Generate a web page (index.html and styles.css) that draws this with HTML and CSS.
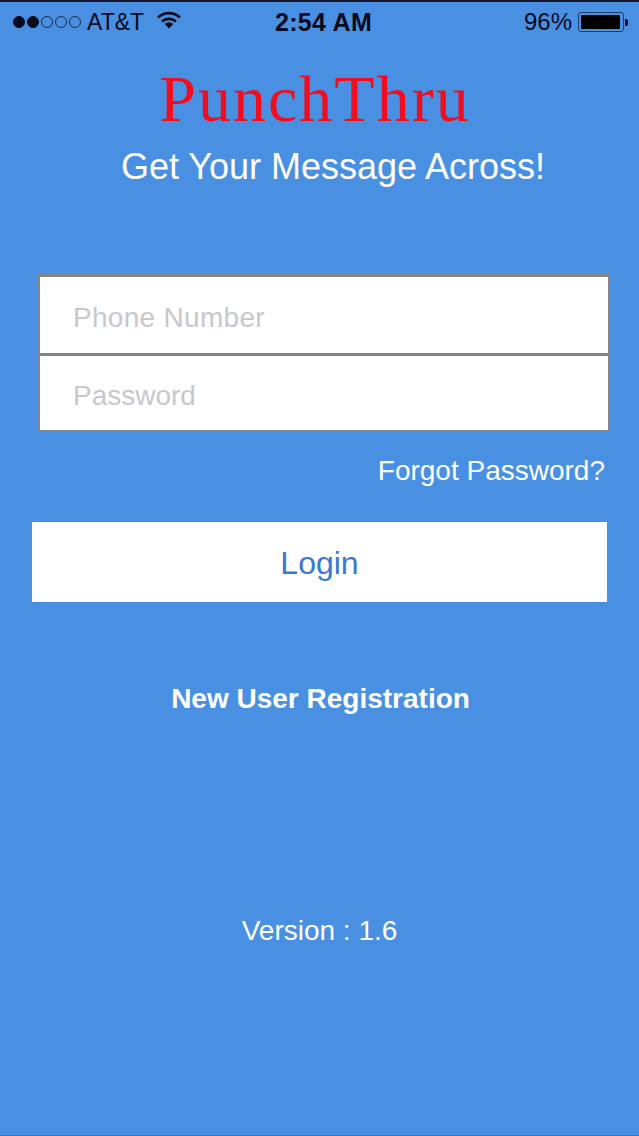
FILE: index.html
```html
<!DOCTYPE html>
<html lang="en">
<head>
  <meta charset="UTF-8" />
  <meta name="viewport" content="width=device-width, initial-scale=1.0">
  <title>PunchThru</title>
  <link rel="stylesheet" href="styles.css">
</head>
<body>
  <div class="status-bar">
    <div class="status-left">
      <span class="signal">
        <i class="dot on"></i><i class="dot on"></i><i class="dot"></i><i class="dot"></i><i class="dot"></i>
      </span>
      <span class="carrier">AT&amp;T</span>
      <svg class="wifi" width="24" height="18" viewBox="0 0 24 18">
        <path d="M1 6.5 A16 16 0 0 1 23 6.5" fill="none" stroke="#0a0a1e" stroke-width="2.6"/>
        <path d="M5 10.5 A10.5 10.5 0 0 1 19 10.5" fill="none" stroke="#0a0a1e" stroke-width="2.6"/>
        <path d="M12 17.5 L7.8 13 A6 6 0 0 1 16.2 13 Z" fill="#0a0a1e"/>
      </svg>
    </div>
    <div class="status-time">2:54 AM</div>
    <div class="status-right">
      <span class="percent">96%</span>
      <span class="battery"><span class="battery-fill"></span></span>
      <span class="battery-tip"></span>
    </div>
  </div>

  <h1 class="logo">PunchThru</h1>
  <p class="tagline">Get Your Message Across!</p>

  <form class="login-fields">
    <div class="field phone">Phone Number</div>
    <div class="field">Password</div>
  </form>

  <div class="forgot">Forgot Password?</div>
  <button class="login-btn" type="button">Login</button>
  <div class="register">New User Registration</div>
  <div class="version">Version : 1.6</div>
</body>
</html>
```

FILE: styles.css
```css
* {
  box-sizing: border-box;
}
html, body {
  margin: 0;
  height: 100%;
}
body {
  font-family: "Liberation Sans", Arial, sans-serif;
  background: #4a90e2;
  color: white;
  height: 1136px;
  overflow: hidden;
  border-top: 2px solid #14162e;
  border-bottom: 1px solid #3a74b8;
}
.status-bar {
  display: grid;
  grid-template-columns: 262px auto 1fr;
  align-items: center;
  height: 40px;
  padding: 0 0 0 13px;
  color: #0a0a1e;
  font-size: 23px;
}
.status-left {
  display: flex;
  align-items: center;
}
.signal {
  display: flex;
  gap: 2px;
}
.dot {
  width: 12px;
  height: 12px;
  border-radius: 50%;
  border: 1px solid #1b2a4a;
}
.dot.on {
  background: #0a0a1e;
  border-color: #0a0a1e;
}
.carrier {
  margin-left: 6px;
}
.wifi {
  margin-left: 13px;
  margin-top: -4px;
}
.status-time {
  font-weight: bold;
  font-size: 25px;
  letter-spacing: 0.3px;
}
.status-right {
  display: flex;
  align-items: center;
  justify-content: flex-end;
  padding-right: 11px;
}
.percent {
  font-size: 24px;
}
.battery {
  display: block;
  width: 46px;
  height: 20px;
  margin-left: 6px;
  padding: 2px;
  border: 1px solid #1f3f70;
  border-radius: 3px;
}
.battery-fill {
  display: block;
  width: 39px;
  height: 100%;
  background: #000;
  border-radius: 1px;
}
.battery-tip {
  width: 3px;
  height: 7px;
  margin-left: 1px;
  background: #0a0a1e;
  border-radius: 0 2px 2px 0;
}
.logo {
  margin: 27px 0 0;
  padding-right: 9px;
  height: 60px;
  line-height: 60px;
  text-align: center;
  font-family: "Liberation Serif", serif;
  font-weight: normal;
  font-size: 66px;
  letter-spacing: 2px;
  color: #f20d1e;
}
.tagline {
  margin: 15px 0 0;
  padding-left: 27px;
  height: 46px;
  line-height: 46px;
  text-align: center;
  font-size: 36px;
}
.login-fields {
  margin: 84px 29px 0 37px;
}
.field {
  height: 77px;
  padding-left: 33px;
  line-height: 80px;
  background: #fff;
  border: solid #848484;
  border-width: 1px 2px 2px 3px;
  color: #c7c7cd;
  font-size: 28px;
}
.field.phone {
  height: 81px;
  line-height: 82px;
  border-top-width: 3px;
  letter-spacing: 0.3px;
}
.forgot {
  margin-top: 21px;
  padding-right: 34px;
  height: 36px;
  line-height: 36px;
  text-align: right;
  font-size: 28px;
}
.login-btn {
  display: block;
  width: 575px;
  height: 80px;
  margin: 33px 0 0 32px;
  padding: 2px 0 0;
  background: #fff;
  border: none;
  color: #3b78d4;
  font-family: inherit;
  font-size: 32px;
}
.register {
  margin-top: 80px;
  padding-left: 2px;
  height: 34px;
  line-height: 34px;
  text-align: center;
  font-weight: bold;
  font-size: 28px;
}
.version {
  margin-top: 198px;
  height: 34px;
  line-height: 34px;
  text-align: center;
  font-size: 28px;
}
```
